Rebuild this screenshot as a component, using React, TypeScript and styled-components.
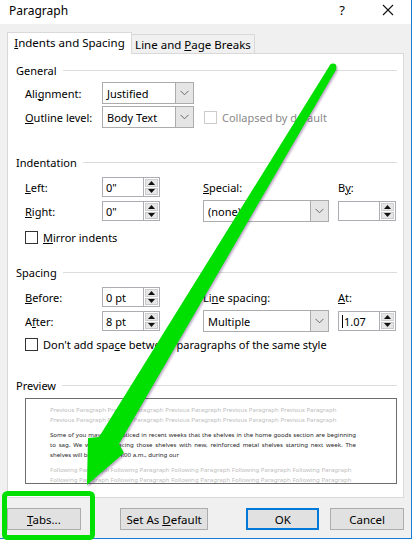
import React from 'react'
import styled, { createGlobalStyle } from 'styled-components'

const GlobalStyle = createGlobalStyle`
  html, body {
    margin: 0;
    padding: 0;
    background: #ffffff;
  }
  body {
    font-family: "Noto Sans", "Open Sans", sans-serif;
  }
`

const Chevron: React.FC = () => (
  <svg width="9" height="6" viewBox="0 0 9 6">
    <polyline points="0.5,0.8 4.5,4.8 8.5,0.8" fill="none" stroke="#6a6a6a" strokeWidth="1" />
  </svg>
)

const Select: React.FC<{ value: string; width: number }> = ({ value, width }) => (
  <SelectBox style={{ width }}>
    <SelectValue>{value}</SelectValue>
    <SelectButton>
      <Chevron />
    </SelectButton>
  </SelectBox>
)

const Spin: React.FC<{ value?: string; caret?: boolean }> = ({ value, caret }) => (
  <SpinBox>
    <SpinValue>
      {caret && <Caret />}
      {value}
    </SpinValue>
    <SpinButtons>
      <SpinHalf>
        <svg width="7" height="4" viewBox="0 0 7 4">
          <polygon points="0,4 3.5,0 7,4" fill="#111" />
        </svg>
      </SpinHalf>
      <SpinHalf $bottom>
        <svg width="7" height="4" viewBox="0 0 7 4">
          <polygon points="0,0 3.5,4 7,0" fill="#111" />
        </svg>
      </SpinHalf>
    </SpinButtons>
  </SpinBox>
)

const Check: React.FC<{ disabled?: boolean; children: React.ReactNode }> = ({ disabled, children }) => (
  <CheckRow $disabled={disabled}>
    <CheckBox $disabled={disabled} />
    <span>{children}</span>
  </CheckRow>
)

const previous = 'Previous Paragraph Previous Paragraph Previous Paragraph Previous Paragraph Previous Paragraph'
const following = 'Following Paragraph Following Paragraph Following Paragraph Following Paragraph Following Paragraph'

const App: React.FC = () => {
  return (
    <Page>
      <GlobalStyle />
      <Window>
        <TitleBar>
          <Title>Paragraph</Title>
          <TitleButtons>
            <Help>?</Help>
            <svg width="12" height="12" viewBox="0 0 12 12">
              <path d="M1 1 L11 11 M11 1 L1 11" stroke="#111" strokeWidth="1.1" />
            </svg>
          </TitleButtons>
        </TitleBar>

        <Body>
          <TabStrip>
            <Tab $active>
              <span>
                <u>I</u>ndents and Spacing
              </span>
            </Tab>
            <Tab>
              <span>
                Line and <u>P</u>age Breaks
              </span>
            </Tab>
          </TabStrip>

          <Panel>
            <Group $top={8}>
              <Heading>General</Heading>
              <GeneralGrid>
                <Label>
                  Ali<u>g</u>nment:
                </Label>
                <Select value="Justified" width={92} />
                <span />
                <Label>
                  <u>O</u>utline level:
                </Label>
                <Select value="Body Text" width={92} />
                <Check disabled>Collapsed by default</Check>
              </GeneralGrid>
            </Group>

            <Group $top={26}>
              <Heading>Indentation</Heading>
              <FieldGrid>
                <Label>
                  <u>L</u>eft:
                </Label>
                <Spin value={'0"'} />
                <span />
                <Label>
                  <u>S</u>pecial:
                </Label>
                <span />
                <Label>
                  B<u>y</u>:
                </Label>
                <Label>
                  <u>R</u>ight:
                </Label>
                <Spin value={'0"'} />
                <span />
                <Select value="(none)" width={126} />
                <span />
                <Spin />
              </FieldGrid>
              <CheckLine>
                <Check>
                  <u>M</u>irror indents
                </Check>
              </CheckLine>
            </Group>

            <Group $top={19}>
              <Heading>Spacing</Heading>
              <FieldGrid>
                <Label>
                  <u>B</u>efore:
                </Label>
                <Spin value="0 pt" />
                <span />
                <Label>
                  Li<u>n</u>e spacing:
                </Label>
                <span />
                <Label>
                  <u>A</u>t:
                </Label>
                <Label>
                  A<u>f</u>ter:
                </Label>
                <Spin value="8 pt" />
                <span />
                <Select value="Multiple" width={126} />
                <span />
                <Spin value="1.07" caret />
              </FieldGrid>
              <CheckLine $top={5}>
                <Check>
                  Don't add spa<u>c</u>e between paragraphs of the same style
                </Check>
              </CheckLine>
            </Group>

            <Group $top={25}>
              <Heading>Preview</Heading>
              <PreviewBox>
                <PreviewLine $tone="light">{previous}</PreviewLine>
                <PreviewLine $tone="light">{previous}</PreviewLine>
                <PreviewPara>
                  <PreviewLine $justify>
                    Some of you may have noticed in recent weeks that the shelves in the home goods section are beginning
                  </PreviewLine>
                  <PreviewLine $justify>
                    to sag. We will be replacing those shelves with new, reinforced metal shelves starting next week. The
                  </PreviewLine>
                  <PreviewLine>shelves will be out 2:00–4:00 a.m., during our</PreviewLine>
                </PreviewPara>
                <PreviewLine $tone="light">{following}</PreviewLine>
                <PreviewLine $tone="light">{following}</PreviewLine>
              </PreviewBox>
            </Group>
          </Panel>

          <ButtonRow>
            <Button $width={74}>
              <span>
                <u>T</u>abs...
              </span>
            </Button>
            <Button $width={89} $left={39}>
              <span>
                Set As <u>D</u>efault
              </span>
            </Button>
            <Button $width={73} $left={38} $primary>
              <span>OK</span>
            </Button>
            <Button $width={74} $left={11}>
              <span>Cancel</span>
            </Button>
          </ButtonRow>
        </Body>
      </Window>

      <Overlay width="413" height="542" viewBox="0 0 413 542">
        <g fill="#00e000" style={{ filter: 'drop-shadow(1px 2px 1px rgba(60, 0, 90, 0.35))' }}>
          <circle cx="333" cy="67" r="3.4" />
          <polygon points="330,65 336.5,69 119,444 124,453 87,485 88,438 99,437" />
        </g>
        <rect x="4.5" y="493.5" width="88" height="44" rx="3" fill="none" stroke="#00e000" strokeWidth="5" />
      </Overlay>
    </Page>
  )
}

export default App

const Page = styled.div`
  position: relative;
  width: 413px;
  height: 542px;
  overflow: hidden;
`

const Window = styled.div`
  width: 411px;
  height: 538px;
  display: flex;
  flex-direction: column;
  border-right: 1px solid #1c7ad1;
  border-bottom: 1px solid #1c7ad1;
  font-size: 11px;
  color: #000;
`

const TitleBar = styled.div`
  height: 24px;
  display: flex;
  align-items: center;
  padding-left: 9px;
  background: #ffffff;
`

const Title = styled.div`
  font-size: 12px;
  margin-top: -4px;
`

const TitleButtons = styled.div`
  margin-left: auto;
  display: flex;
  align-items: center;
  gap: 37px;
  padding-right: 17px;
  margin-top: -4px;
`

const Help = styled.span`
  font-size: 13px;
`

const Body = styled.div`
  flex: 1;
  background: #f0f0f0;
  padding: 8px 7px 0 7px;
  display: flex;
  flex-direction: column;
`

const TabStrip = styled.div`
  display: flex;
  align-items: flex-end;
  height: 21px;
`

const Tab = styled.div<{ $active?: boolean }>`
  box-sizing: border-box;
  display: flex;
  align-items: center;
  justify-content: center;
  white-space: nowrap;
  height: ${p => (p.$active ? '22px' : '19px')};
  width: ${p => (p.$active ? '125px' : '123px')};
  margin-bottom: ${p => (p.$active ? '-1px' : '0')};
  background: ${p => (p.$active ? '#ffffff' : '#f0f0f0')};
  border: 1px solid #d9d9d9;
  border-bottom: none;
  border-left: ${p => (p.$active ? '1px solid #d9d9d9' : 'none')};
  position: relative;
  z-index: ${p => (p.$active ? 1 : 0)};
  padding-bottom: ${p => (p.$active ? '2px' : '0')};
  font-size: 11.5px;
`

const Panel = styled.div`
  box-sizing: border-box;
  height: 445px;
  background: #ffffff;
  border: 1px solid #d9d9d9;
  padding: 0 6px 0 8px;
`

const Group = styled.div<{ $top: number }>`
  margin-top: ${p => p.$top}px;
`

const Heading = styled.div`
  display: flex;
  align-items: center;
  gap: 6px;
  height: 16px;
  &::after {
    content: '';
    flex: 1;
    height: 1px;
    background: #dcdcdc;
    margin-top: 1px;
  }
`

const GeneralGrid = styled.div`
  display: grid;
  grid-template-columns: 77px 92px auto;
  grid-auto-rows: 22px;
  row-gap: 2px;
  align-items: center;
  margin: 4px 0 0 9px;
`

const FieldGrid = styled.div`
  display: grid;
  grid-template-columns: 77px 58px 43px 126px 9px 58px;
  grid-auto-rows: 22px;
  row-gap: 2px;
  align-items: center;
  margin: 6px 0 0 9px;
`

const Label = styled.span`
  white-space: nowrap;
`

const SelectBox = styled.div`
  box-sizing: border-box;
  height: 22px;
  display: flex;
  border: 1px solid #acacac;
  background: #ffffff;
`

const SelectValue = styled.div`
  flex: 1;
  display: flex;
  align-items: center;
  padding-left: 4px;
`

const SelectButton = styled.div`
  width: 17px;
  display: flex;
  align-items: center;
  justify-content: center;
  background: #e5e5e5;
  border-left: 1px solid #acacac;
`

const SpinBox = styled.div`
  box-sizing: border-box;
  width: 58px;
  height: 20px;
  display: flex;
  border: 1px solid #abadb3;
  background: #ffffff;
`

const SpinValue = styled.div`
  flex: 1;
  display: flex;
  align-items: center;
  padding-left: 3px;
`

const Caret = styled.span`
  width: 1px;
  height: 13px;
  background: #000;
  margin-right: 1px;
`

const SpinButtons = styled.div`
  width: 16px;
  display: flex;
  flex-direction: column;
  border-left: 1px solid #abadb3;
  padding: 1px;
  box-sizing: border-box;
  gap: 1px;
`

const SpinHalf = styled.div<{ $bottom?: boolean }>`
  flex: 1;
  display: flex;
  align-items: center;
  justify-content: center;
  background: #e6e6e6;
  border: 1px solid ${p => (p.$bottom ? '#c9c9c9' : '#d0d0d0')};
  box-sizing: border-box;
`

const CheckLine = styled.div<{ $top?: number }>`
  margin: ${p => p.$top ?? 8}px 0 0 9px;
`

const CheckRow = styled.div<{ $disabled?: boolean }>`
  display: flex;
  align-items: center;
  gap: 5px;
  white-space: nowrap;
  color: ${p => (p.$disabled ? '#8a8a8a' : '#000')};
  margin-left: ${p => (p.$disabled ? '10px' : '0')};
`

const CheckBox = styled.span<{ $disabled?: boolean }>`
  box-sizing: border-box;
  width: 13px;
  height: 13px;
  border: 1px solid ${p => (p.$disabled ? '#cccccc' : '#333333')};
  background: #ffffff;
  flex-shrink: 0;
`

const PreviewBox = styled.div`
  box-sizing: border-box;
  height: 86px;
  margin: 5px 0 0 9px;
  width: 372px;
  border: 1px solid #6d6d6d;
  padding: 6px 40px 0 24px;
  overflow: hidden;
  font-size: 6.1px;
`

const PreviewLine = styled.div<{ $tone?: 'light'; $justify?: boolean }>`
  height: 10px;
  line-height: 10px;
  color: ${p => (p.$tone === 'light' ? '#bdbdbd' : '#1e1e1e')};
  text-align: ${p => (p.$justify ? 'justify' : 'left')};
  text-align-last: ${p => (p.$justify ? 'justify' : 'auto')};
  white-space: ${p => (p.$justify ? 'normal' : 'nowrap')};
`

const PreviewPara = styled.div`
  margin: 5px 0;
`

const ButtonRow = styled.div`
  display: flex;
  margin-top: 10px;
`

const Button = styled.div<{ $width: number; $left?: number; $primary?: boolean }>`
  box-sizing: border-box;
  width: ${p => p.$width}px;
  height: 22px;
  margin-left: ${p => p.$left ?? 0}px;
  display: flex;
  align-items: center;
  justify-content: center;
  white-space: nowrap;
  font-size: 11.5px;
  background: #e1e1e1;
  border: ${p => (p.$primary ? '2px solid #0078d7' : '1px solid #adadad')};
`

const Overlay = styled.svg`
  position: absolute;
  left: 0;
  top: 0;
  pointer-events: none;
  overflow: visible;
`
